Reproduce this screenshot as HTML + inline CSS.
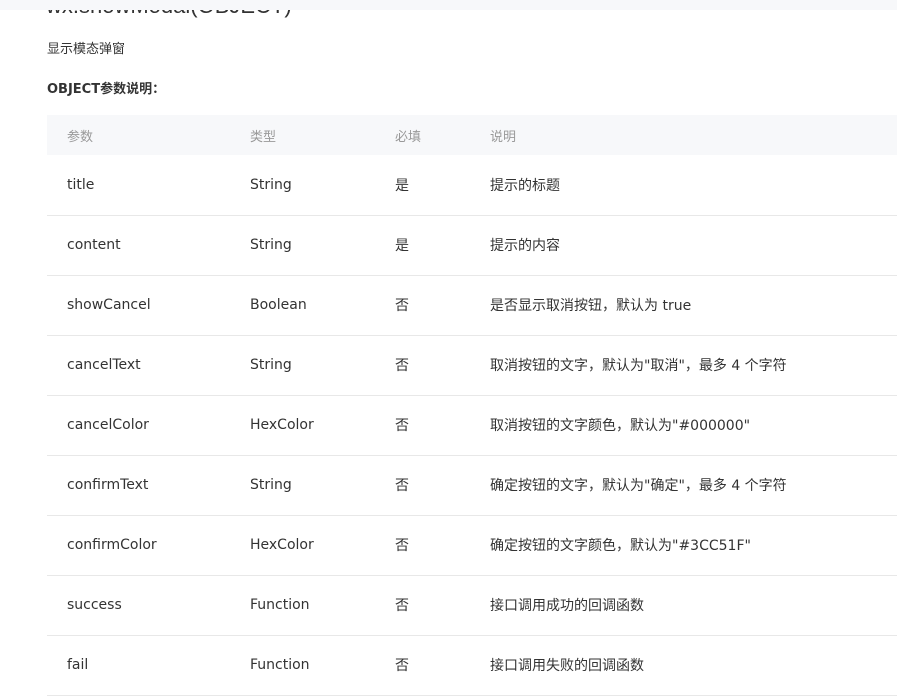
<!DOCTYPE html>
<html><head><meta charset="utf-8"><style>
body{margin:0;width:897px;height:700px;overflow:hidden;background:#fff;font-family:"DejaVu Sans","Noto Sans CJK SC",sans-serif;color:#333;position:relative}
.top{position:absolute;left:0;top:0;width:897px;height:10px;background:#f7f8fa;z-index:2}
.title{position:absolute;left:46px;top:-7px;font-size:22px;color:#333;white-space:nowrap;font-family:"Liberation Sans",sans-serif}
.desc{position:absolute;left:47px;top:38px;font-size:13px}
.h{position:absolute;left:47px;top:78px;font-size:13px;font-weight:bold}
table{position:absolute;left:47px;top:115px;width:870px;border-collapse:collapse;font-size:14px}
th{height:40px;background:#f7f8fa;color:#999;font-weight:normal;text-align:left;font-size:13px;padding:0}
td{height:60px;border-bottom:1px solid #e8e8e8;padding:0;box-sizing:border-box}
.c1{padding-left:20px;width:183px}.c2{width:145px}.c3{width:95px}
</style></head><body>
<div class="top"></div>
<div class="title">wx.showModal(OBJECT)</div>
<div class="desc">显示模态弹窗</div>
<div class="h">OBJECT参数说明：</div>
<table>
<tr><th class="c1">参数</th><th class="c2">类型</th><th class="c3">必填</th><th>说明</th></tr>
<tr><td class="c1">title</td><td>String</td><td>是</td><td>提示的标题</td></tr>
<tr><td class="c1">content</td><td>String</td><td>是</td><td>提示的内容</td></tr>
<tr><td class="c1">showCancel</td><td>Boolean</td><td>否</td><td>是否显示取消按钮，默认为 true</td></tr>
<tr><td class="c1">cancelText</td><td>String</td><td>否</td><td>取消按钮的文字，默认为"取消"，最多 4 个字符</td></tr>
<tr><td class="c1">cancelColor</td><td>HexColor</td><td>否</td><td>取消按钮的文字颜色，默认为"#000000"</td></tr>
<tr><td class="c1">confirmText</td><td>String</td><td>否</td><td>确定按钮的文字，默认为"确定"，最多 4 个字符</td></tr>
<tr><td class="c1">confirmColor</td><td>HexColor</td><td>否</td><td>确定按钮的文字颜色，默认为"#3CC51F"</td></tr>
<tr><td class="c1">success</td><td>Function</td><td>否</td><td>接口调用成功的回调函数</td></tr>
<tr><td class="c1">fail</td><td>Function</td><td>否</td><td>接口调用失败的回调函数</td></tr>
</table>
</body></html>
